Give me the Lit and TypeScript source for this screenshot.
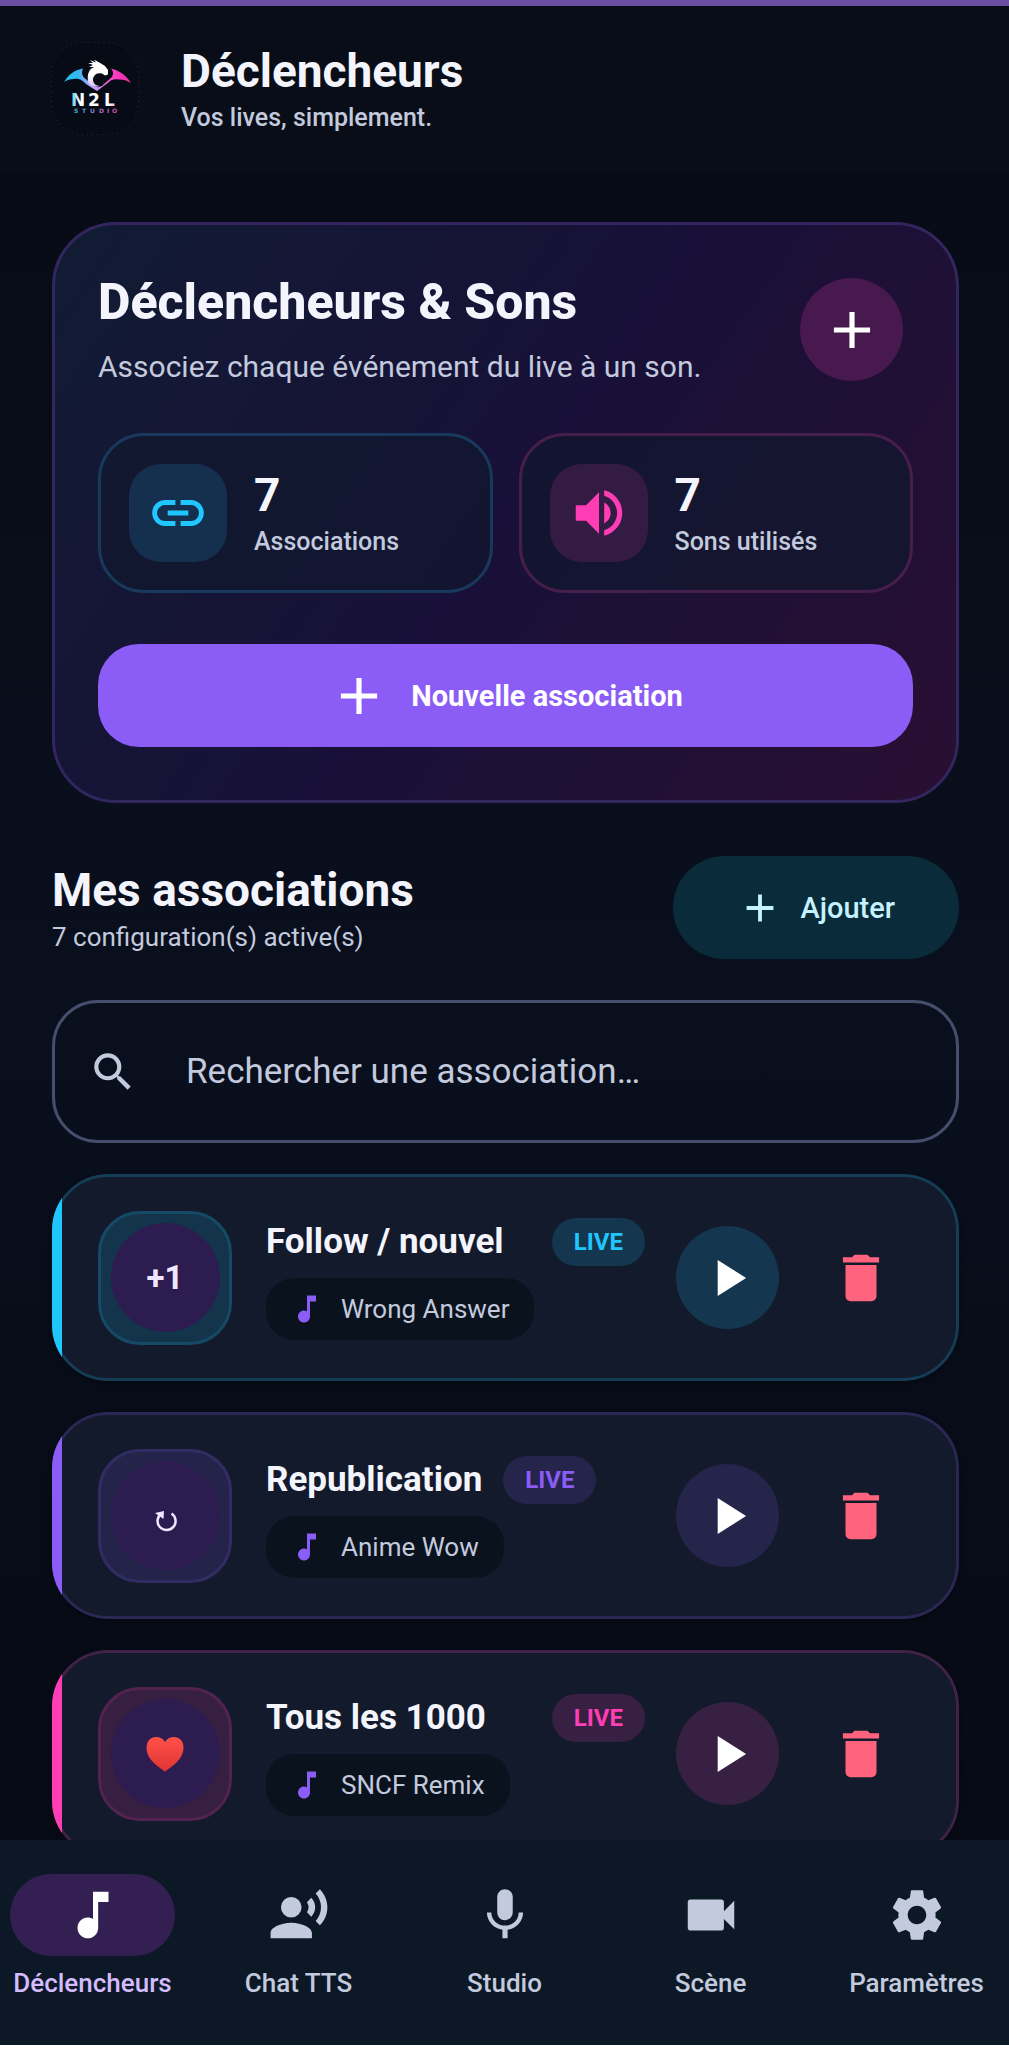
import { LitElement, html, css, svg, nothing } from 'lit';
import { customElement, property, state } from 'lit/decorators.js';
import { classMap } from 'lit/directives/class-map.js';

const ICONS: Record<string, string> = {
  add: 'M19 13h-6v6h-2v-6H5v-2h6V5h2v6h6z',
  link: 'M3.9 12c0-1.71 1.39-3.1 3.1-3.1h4V7H7c-2.76 0-5 2.24-5 5s2.24 5 5 5h4v-1.9H7c-1.71 0-3.1-1.39-3.1-3.1zM8 13h8v-2H8v2zm9-6h-4v1.9h4c1.71 0 3.1 1.39 3.1 3.1s-1.39 3.1-3.1 3.1h-4V17h4c2.76 0 5-2.24 5-5s-2.24-5-5-5z',
  volume: 'M3 9v6h4l5 5V4L7 9H3zm13.5 3c0-1.77-1.02-3.29-2.5-4.03v8.05c1.48-.73 2.5-2.25 2.5-4.02zM14 3.23v2.06c2.89.86 5 3.54 5 6.71s-2.11 5.85-5 6.71v2.06c4.01-.91 7-4.49 7-8.77s-2.99-7.86-7-8.77z',
  search: 'M15.5 14h-.79l-.28-.27A6.471 6.471 0 0 0 16 9.5 6.5 6.5 0 1 0 9.5 16c1.61 0 3.09-.59 4.23-1.57l.27.28v.79l5 4.99L20.49 19l-4.99-5zm-6 0C7.01 14 5 11.99 5 9.5S7.01 5 9.5 5 14 7.01 14 9.5 11.99 14 9.5 14z',
  note: 'M12 3v10.55c-.59-.34-1.27-.55-2-.55-2.21 0-4 1.79-4 4s1.79 4 4 4 4-1.79 4-4V7h4V3h-6z',
  play: 'M8 5v14l11-7z',
  trash: 'M6 19c0 1.1.9 2 2 2h8c1.1 0 2-.9 2-2V7H6v12zM19 4h-3.5l-1-1h-5l-1 1H5v2h14V4z',
  voice: 'M9 5a4 4 0 1 1 0 8 4 4 0 0 1 0-8zM9 15c-2.67 0-8 1.34-8 4v2h16v-2c0-2.66-5.33-4-8-4zM16.76 5.36l-1.68 1.69c.84 1.18.84 2.71 0 3.89l1.68 1.69c2.02-2.02 2.02-5.07 0-7.27zM20.07 2l-1.63 1.63c2.77 3.02 2.77 7.56 0 10.74L20.07 16c3.9-3.89 3.91-9.95 0-14z',
  mic: 'M12 14c1.66 0 2.99-1.34 2.99-3L15 5c0-1.66-1.34-3-3-3S9 3.34 9 5v6c0 1.66 1.34 3 3 3zm5.3-3c0 3-2.54 5.1-5.3 5.1S6.7 14 6.7 11H5c0 3.41 2.72 6.23 6 6.72V21h2v-3.28c3.28-.48 6-3.3 6-6.72h-1.7z',
  camera: 'M17 10.5V7c0-.55-.45-1-1-1H4c-.55 0-1 .45-1 1v10c0 .55.45 1 1 1h12c.55 0 1-.45 1-1v-3.5l4 4v-11l-4 4z',
  settings: 'M19.14 12.94c.04-.3.06-.61.06-.94 0-.32-.02-.64-.07-.94l2.03-1.58c.18-.14.23-.41.12-.61l-1.92-3.32c-.12-.22-.37-.29-.59-.22l-2.39.96c-.5-.38-1.03-.7-1.62-.94l-.36-2.54c-.04-.24-.24-.41-.48-.41h-3.84c-.24 0-.43.17-.47.41l-.36 2.54c-.59.24-1.13.57-1.62.94l-2.39-.96c-.22-.08-.47 0-.59.22L2.74 8.87c-.12.21-.08.47.12.61l2.03 1.58c-.05.3-.09.63-.09.94s.02.64.07.94l-2.03 1.58c-.18.14-.23.41-.12.61l1.92 3.32c.12.22.37.29.59.22l2.39-.96c.5.38 1.03.7 1.62.94l.36 2.54c.05.24.24.41.48.41h3.84c.24 0 .44-.17.47-.41l.36-2.54c.59-.24 1.13-.56 1.62-.94l2.39.96c.22.08.47 0 .59-.22l1.92-3.32c.12-.22.07-.47-.12-.61l-2.01-1.58zM12 15.6c-1.98 0-3.6-1.62-3.6-3.6s1.62-3.6 3.6-3.6 3.6 1.62 3.6 3.6-1.62 3.6-3.6 3.6z',
};

/**
 * Single-path icon on a 24 unit grid
 *
 * @element n2l-icon
 */
@customElement('n2l-icon')
export class N2lIcon extends LitElement {
  @property() name = 'add';

  static styles = css`
    :host {
      display: block;
      flex: none;
      width: 62px;
      height: 62px;
    }

    svg {
      display: block;
      width: 100%;
      height: 100%;
      fill: currentColor;
    }
  `;

  render() {
    return html`<svg viewBox="0 0 24 24" aria-hidden="true"><path d=${ICONS[this.name]}></path></svg>`;
  }
}

/**
 * Studio logo
 *
 * @element n2l-logo
 */
@customElement('n2l-logo')
export class N2lLogo extends LitElement {
  static styles = css`
    :host {
      display: block;
      flex: none;
      width: 90px;
      height: 93px;
    }

    svg {
      display: block;
    }

    text {
      font-family: 'DejaVu Sans', sans-serif;
      font-weight: 700;
    }

    .name {
      font-size: 17px;
    }

    .studio {
      font-size: 6px;
    }
  `;

  render() {
    return html`
      <svg width="90" height="93" viewBox="0 0 90 93" role="img" aria-label="N2L Studio">
        <defs>
          <linearGradient id="wings" gradientUnits="userSpaceOnUse" x1="14" y1="0" x2="80" y2="0">
            <stop offset="0" stop-color="#19c9e8" />
            <stop offset="0.22" stop-color="#36b4f0" />
            <stop offset="0.4" stop-color="#b9a6f8" />
            <stop offset="0.55" stop-color="#e08cf2" />
            <stop offset="0.75" stop-color="#ff3fc4" />
            <stop offset="1" stop-color="#f02aa6" />
          </linearGradient>
          <linearGradient id="dragon" x1="0" y1="0" x2="0" y2="1">
            <stop offset="0.6" stop-color="#ffffff" />
            <stop offset="1" stop-color="#d5c2fa" />
          </linearGradient>
          <linearGradient id="word" gradientUnits="userSpaceOnUse" x1="20" y1="0" x2="70" y2="0">
            <stop offset="0" stop-color="#35c8e6" />
            <stop offset="0.2" stop-color="#ffffff" />
            <stop offset="0.78" stop-color="#ffffff" />
            <stop offset="1" stop-color="#ff4fc0" />
          </linearGradient>
          <linearGradient id="sub" gradientUnits="userSpaceOnUse" x1="22" y1="0" x2="68" y2="0">
            <stop offset="0" stop-color="#2fb5c4" />
            <stop offset="0.45" stop-color="#8a7fd0" />
            <stop offset="1" stop-color="#e0489c" />
          </linearGradient>
        </defs>
        <rect x="1.5" y="0.5" width="87" height="92" rx="32" fill="#060b16" stroke="#2a303c" stroke-dasharray="1 4" />
        <path fill="url(#wings)" d="M14 40C19 32 25 28 33 26.5C31 31 32 35 37 38L42 43C46 46 51 46 54 42L62 35C64 31 63 29 61 26.5C70 29 77 34 81 41C76 38 72 37 68 37.5C64 37 61 38 59 40L47 49L36 42C31 37 28 36.500 24 37C20 37 17 38 14 40Z" />
        <path fill="url(#dragon)" d="M38 39C37 32 39 27 44 25L39 25L43 23L38 21L43 21L40 18L46 20.5L44 17.5L51 21.5L55 24L58 28L58 32.5L55 33.5L52 31.5C46 30 43 34 43 38C43 41 46 44 50 44C44 46 39 43 38 39Z" />
        <text class="name" y="64" x="21 38 54" fill="url(#word)">N2L</text>
        <text class="studio" y="71" x="24 32 40 49 57 62" fill="url(#sub)">STUDIO</text>
      </svg>
    `;
  }
}

interface Association {
  tone: 'cyan' | 'violet' | 'pink';
  mark: 'text' | 'repeat' | 'heart';
  title: string;
  clipped: boolean;
  sound: string;
}

const ASSOCIATIONS: Association[] = [
  { tone: 'cyan', mark: 'text', title: 'Follow / nouvel', clipped: true, sound: 'Wrong Answer' },
  { tone: 'violet', mark: 'repeat', title: 'Republication', clipped: false, sound: 'Anime Wow' },
  { tone: 'pink', mark: 'heart', title: 'Tous les 1000', clipped: true, sound: 'SNCF Remix' },
];

const TABS = [
  { icon: 'note', label: 'Déclencheurs' },
  { icon: 'voice', label: 'Chat TTS' },
  { icon: 'mic', label: 'Studio' },
  { icon: 'camera', label: 'Scène' },
  { icon: 'settings', label: 'Paramètres' },
];

@customElement('app-root')
export class AppRoot extends LitElement {
  @state() private _tab = 0;

  static styles = css`
    :host {
      display: flex;
      flex-direction: column;
      height: 100vh;
      box-sizing: border-box;
      border-top: 6px solid #6b4fa5;
      font-family: Roboto, 'Liberation Sans', sans-serif;
      color: #f4f5fc;
      background: linear-gradient(180deg, #060a15 0%, #070d18 20%, #0a0f1e 50%, #070c18 72%, #070a14 100%);
    }

    * {
      box-sizing: border-box;
    }

    h1,
    h2,
    h3,
    p {
      margin: 0;
    }

    button {
      display: flex;
      align-items: center;
      justify-content: center;
      border: none;
      padding: 0;
      font: inherit;
      color: #ffffff;
      background: none;
      cursor: pointer;
    }

    .cyan {
      --accent: #20c7ff;
    }

    .violet {
      --accent: #8b5cf6;
    }

    .pink {
      --accent: #ff3db4;
    }

    .title {
      margin-bottom: 2px;
      font-size: 46px;
      font-weight: 700;
      line-height: 56px;
    }

    .caption {
      font-size: 26px;
      line-height: 34px;
      color: #c3cadd;
    }

    .caption.medium {
      font-size: 25px;
      font-weight: 500;
    }

    .topbar {
      display: flex;
      flex: none;
      align-items: center;
      gap: 41px;
      padding: 36px 50px;
      background: #080d18;
    }

    main {
      flex: 1;
      min-height: 0;
      padding: 51px 50px 0 52px;
      overflow-y: auto;
      scrollbar-width: none;
    }

    .hero {
      padding: 43px;
      border: 3px solid #33265f;
      border-radius: 64px;
      background: linear-gradient(125deg, #111c33 0%, #181038 50%, #290f32 100%) border-box;
    }

    .hero-head {
      display: flex;
      align-items: center;
      justify-content: space-between;
      height: 123px;
      padding-right: 10px;
    }

    .hero-title {
      margin-bottom: 14px;
      font-size: 50px;
      font-weight: 800;
      line-height: 60px;
    }

    .hero-text {
      font-size: 30px;
      line-height: 42px;
      color: #c3cadd;
    }

    .round {
      flex: none;
      width: 103px;
      height: 103px;
      border-radius: 50%;
    }

    .round.add {
      background: #47194e;
    }

    .stats {
      display: grid;
      grid-template-columns: 1fr 1fr;
      gap: 26px;
      margin: 42px 0 51px;
    }

    .stat {
      display: flex;
      align-items: center;
      gap: 27px;
      padding: 28px;
      border: 3px solid color-mix(in srgb, var(--accent) 20%, #161632);
      border-radius: 46px;
      background: rgba(17, 24, 46, 0.7);
    }

    .stat-icon {
      display: flex;
      align-items: center;
      justify-content: center;
      width: 98px;
      height: 98px;
      border-radius: 32px;
      color: var(--accent);
      background: color-mix(in srgb, var(--accent) 14%, #131632);
    }

    .primary {
      gap: 21px;
      width: 100%;
      height: 103px;
      margin-bottom: 10px;
      border-radius: 41px;
      font-size: 29px;
      font-weight: 700;
      background: #8b5cf6;
    }

    .section-head {
      display: flex;
      align-items: center;
      justify-content: space-between;
      margin: 53px 0 41px;
    }

    .tonal {
      gap: 17px;
      height: 103px;
      padding: 0 64px;
      border-radius: 52px;
      font-size: 29px;
      font-weight: 500;
      color: #c4f3ff;
      background: #0a2c3a;
    }

    .tonal n2l-icon {
      width: 46px;
      height: 46px;
    }

    .search {
      display: flex;
      align-items: center;
      gap: 48px;
      height: 143px;
      padding: 0 33px;
      border: 3px solid #454f6c;
      border-radius: 46px;
      color: #c3cadd;
    }

    .search n2l-icon {
      width: 50px;
      height: 50px;
    }

    .search input {
      flex: 1;
      min-width: 0;
      border: none;
      padding: 0;
      outline: none;
      font: inherit;
      font-size: 35px;
      color: #f4f5fc;
      background: none;
    }

    .search input::placeholder {
      color: #c3cadd;
      opacity: 1;
    }

    .list {
      display: flex;
      flex-direction: column;
      gap: 31px;
      margin: 31px 0 0;
      padding: 0;
      list-style: none;
    }

    .card {
      position: relative;
      display: flex;
      align-items: center;
      height: 207px;
      padding: 0 37px 0 46px;
      overflow: hidden;
      border-radius: 56px;
      background: #121a2c;
      box-shadow: 0 3px 6px rgba(0, 0, 0, 0.3);
    }

    /* outline, then the accent strip over its left side */
    .card::before,
    .card::after {
      position: absolute;
      top: 0;
      bottom: 0;
      left: 0;
      content: '';
      pointer-events: none;
    }

    .card::before {
      right: 0;
      border: 3px solid color-mix(in srgb, var(--accent) 20%, #121a2c);
      border-radius: inherit;
    }

    .card::after {
      width: 10px;
      background: var(--accent);
    }

    .tile {
      display: flex;
      flex: none;
      align-items: center;
      justify-content: center;
      width: 134px;
      height: 134px;
      border: 3px solid color-mix(in srgb, var(--accent) 27%, #121a2c);
      border-radius: 42px;
      background: color-mix(in srgb, var(--accent) 15%, #121a2c);
    }

    .disc {
      display: flex;
      align-items: center;
      justify-content: center;
      width: 109px;
      height: 109px;
      border-radius: 50%;
      font-size: 33px;
      font-weight: 700;
      color: #f0e6ff;
      background: #2c1c50;
    }

    .info {
      display: flex;
      flex: 1;
      flex-direction: column;
      align-items: flex-start;
      gap: 12px;
      min-width: 0;
      margin: 0 21px 0 34px;
      padding: 2px 10px 0 0;
    }

    .info-head {
      display: flex;
      align-items: center;
      gap: 21px;
      width: 100%;
    }

    .name {
      overflow: hidden;
      font-size: 35px;
      font-weight: 700;
      line-height: 48px;
      white-space: nowrap;
    }

    .name.clipped {
      flex: 1;
    }

    .badge {
      flex: none;
      padding: 7px 22px;
      border-radius: 24px;
      font-size: 24px;
      font-weight: 700;
      line-height: 34px;
      color: var(--accent);
      background: color-mix(in srgb, var(--accent) 16%, #121a2c);
    }

    .chip {
      display: flex;
      align-items: center;
      gap: 16px;
      padding: 14px 25px 14px 23px;
      border-radius: 28px;
      background: #0a121e;
    }

    .chip n2l-icon {
      width: 36px;
      height: 36px;
      margin: -1px 0;
      color: #8b5cf6;
    }

    .play {
      margin-right: 20px;
      background: color-mix(in srgb, var(--accent) 16%, #121a2c);
    }

    .delete {
      width: 123px;
      height: 123px;
      color: #ff637d;
    }

    nav {
      display: grid;
      flex: none;
      grid-template-columns: repeat(5, 1fr);
      gap: 21px;
      height: 208px;
      padding-top: 34px;
      border-bottom: 3px solid #ffffff;
      background: #0c1826;
    }

    .tab {
      display: flex;
      flex-direction: column;
      align-items: center;
      gap: 10px;
      font-size: 26px;
      font-weight: 500;
      line-height: 34px;
      color: #c3cadd;
      text-decoration: none;
      white-space: nowrap;
    }

    .pill {
      display: flex;
      align-items: center;
      justify-content: center;
      width: 165px;
      height: 82px;
      border-radius: 41px;
    }

    .tab.active {
      color: #d3bcff;
    }

    .tab.active .pill {
      color: #ffffff;
      background: #331f52;
    }
  `;

  private _renderMark(mark: Association['mark']) {
    if (mark === 'repeat') {
      return html`
        <svg width="30" height="34" viewBox="0 0 30 34" aria-hidden="true">
          ${svg`
            <path d="M21.5 14.5A9 9 0 1 1 11.5 14.6" fill="none" stroke="#f0e6ff" stroke-width="2.5" />
            <path d="M5 14L14 12L13.5 20z" fill="#f0e6ff" />
          `}
        </svg>
      `;
    }
    if (mark === 'heart') {
      return html`
        <svg width="38" height="36" viewBox="0 0 38 36" aria-hidden="true">
          ${svg`
            <defs>
              <linearGradient id="heart" x1="0" y1="0" x2="0" y2="1">
                <stop offset="0" stop-color="#ff5148" />
                <stop offset="1" stop-color="#e03535" />
              </linearGradient>
            </defs>
            <path d="M19 35.5C13 31 .5 24 .5 11.5.5 5 5 1 10 1c4 0 7 1.8 9 5 2-3.2 5-5 9-5 5 0 9.5 4 9.5 10.500C37.5 24 25 31 19 35.5z" fill="url(#heart)" />
          `}
        </svg>
      `;
    }
    return html`+1`;
  }

  private _renderCard(item: Association) {
    return html`
      <li class="card ${item.tone}">
        <div class="tile"><div class="disc">${this._renderMark(item.mark)}</div></div>
        <div class="info">
          <div class="info-head">
            <h3 class=${classMap({ name: true, clipped: item.clipped })}>${item.title}</h3>
            <span class="badge">LIVE</span>
          </div>
          <div class="chip caption"><n2l-icon name="note"></n2l-icon>${item.sound}</div>
        </div>
        <button class="round play" aria-label="Lire"><n2l-icon name="play"></n2l-icon></button>
        <button class="delete" aria-label="Supprimer"><n2l-icon name="trash"></n2l-icon></button>
      </li>
    `;
  }

  private _selectTab(e: Event, index: number) {
    e.preventDefault();
    this._tab = index;
  }

  render() {
    return html`
      <header class="topbar">
        <n2l-logo></n2l-logo>
        <div>
          <h1 class="title">Déclencheurs</h1>
          <p class="caption medium">Vos lives, simplement.</p>
        </div>
      </header>

      <main>
        <section class="hero">
          <div class="hero-head">
            <div>
              <h2 class="hero-title">Déclencheurs &amp; Sons</h2>
              <p class="hero-text">Associez chaque événement du live à un son.</p>
            </div>
            <button class="round add" aria-label="Ajouter"><n2l-icon name="add"></n2l-icon></button>
          </div>
          <div class="stats">
            <div class="stat cyan">
              <div class="stat-icon"><n2l-icon name="link"></n2l-icon></div>
              <div>
                <div class="title">7</div>
                <div class="caption medium">Associations</div>
              </div>
            </div>
            <div class="stat pink">
              <div class="stat-icon"><n2l-icon name="volume"></n2l-icon></div>
              <div>
                <div class="title">7</div>
                <div class="caption medium">Sons utilisés</div>
              </div>
            </div>
          </div>
          <button class="primary"><n2l-icon name="add"></n2l-icon>Nouvelle association</button>
        </section>

        <div class="section-head">
          <div>
            <h2 class="title">Mes associations</h2>
            <p class="caption">7 configuration(s) active(s)</p>
          </div>
          <button class="tonal"><n2l-icon name="add"></n2l-icon>Ajouter</button>
        </div>

        <label class="search">
          <n2l-icon name="search"></n2l-icon>
          <input type="search" aria-label="Rechercher une association" placeholder="Rechercher une association…" />
        </label>

        <ul class="list">
          ${ASSOCIATIONS.map((item) => this._renderCard(item))}
        </ul>
      </main>

      <nav>
        ${TABS.map((tab, i) => html`
          <a
            class=${classMap({ tab: true, active: i === this._tab })}
            href="#"
            aria-current=${i === this._tab ? 'page' : nothing}
            @click=${(e: Event) => this._selectTab(e, i)}
          >
            <span class="pill"><n2l-icon name=${tab.icon}></n2l-icon></span>
            ${tab.label}
          </a>
        `)}
      </nav>
    `;
  }
}

declare global {
  interface HTMLElementTagNameMap {
    'n2l-icon': N2lIcon;
    'n2l-logo': N2lLogo;
    'app-root': AppRoot;
  }
}
